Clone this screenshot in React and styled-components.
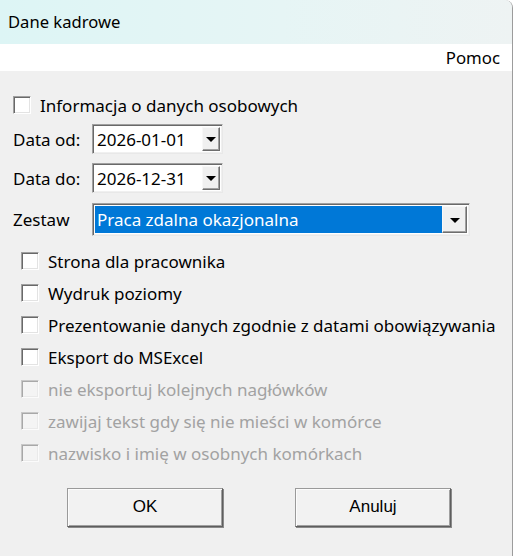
import React from 'react';
import styled, { createGlobalStyle } from 'styled-components';

const GlobalStyle = createGlobalStyle`
	html, body {
		margin: 0;
		padding: 0;
		background: #ffffff;
	}
	body {
		font-family: "Noto Sans", "Open Sans", sans-serif;
		color: #000;
	}
`;

const Window = styled.div`
	width: 513px;
	height: 556px;
	box-sizing: border-box;
	border-right: 1px solid #9c9c9c;
	border-top-right-radius: 8px;
	background: #f0f0f0;
	display: flex;
	flex-direction: column;
	overflow: hidden;
`;

const TitleBar = styled.div`
	height: 44px;
	flex: none;
	display: flex;
	align-items: center;
	padding-left: 8px;
	padding-bottom: 2px;
	box-sizing: border-box;
	background: linear-gradient(90deg, #ddf5f5 0%, #e6f5f5 55%, #eef3f3 100%);
	font-size: 16.6px;
`;

const MenuBar = styled.div`
	height: 27px;
	flex: none;
	display: flex;
	justify-content: flex-end;
	align-items: center;
	padding-right: 12px;
	background: #ffffff;
	font-size: 16.8px;
`;

const Body = styled.div`
	flex: 1;
	display: flex;
	flex-direction: column;
	padding: 20px 0 0 13px;
	font-size: 17px;
`;

const Row = styled.div`
	display: flex;
	align-items: center;
	height: ${p => p.h || 28}px;
	margin-top: ${p => p.mt || 0}px;
	margin-left: ${p => p.indent || 0}px;
	color: ${p => (p.disabled ? '#a2a2a2' : '#000')};
`;

const Box = styled.span`
	width: 18px;
	height: 18px;
	box-sizing: border-box;
	flex: none;
	margin-right: 9px;
	background: ${p => (p.disabled ? '#f4f4f4' : '#ffffff')};
	border: 1px solid;
	border-color: ${p => (p.disabled ? '#c8c8c8 #fbfbfb #fbfbfb #c8c8c8' : '#a0a0a0 #ffffff #ffffff #a0a0a0')};
	box-shadow: ${p => (p.disabled
		? 'inset 1px 1px 0 #a8a8a8, inset -1px -1px 0 #eaeaea'
		: 'inset 1px 1px 0 #696969, inset -1px -1px 0 #e3e3e3')};
`;

const Label = styled.span`
	width: 79px;
	flex: none;
`;

const Sunken = styled.div`
	width: ${p => p.w}px;
	height: ${p => p.h}px;
	box-sizing: border-box;
	display: flex;
	align-items: stretch;
	background: #ffffff;
	border: 1px solid;
	border-color: #a0a0a0 #e8e8e8 #e8e8e8 #a0a0a0;
	box-shadow: inset 1px 1px 0 #696969, inset -1px -1px 0 #f0f0f0;
	padding: 2px;
`;

const Value = styled.div`
	flex: 1;
	display: flex;
	align-items: center;
	padding-left: 2px;
	font-size: 17px;
	background: ${p => (p.selected ? '#0078d7' : 'transparent')};
	color: ${p => (p.selected ? '#ffffff' : '#000')};
`;

const DropButton = styled.div`
	width: ${p => p.w || 18}px;
	flex: none;
	display: flex;
	align-items: center;
	justify-content: center;
	box-sizing: border-box;
	background: #f0f0f0;
	border: 1px solid;
	border-color: #f8f8f8 #6e6e6e #6e6e6e #f8f8f8;
	box-shadow: inset -1px -1px 0 #a0a0a0;
`;

const Arrow = styled.span`
	width: 0;
	height: 0;
	border-left: 5px solid transparent;
	border-right: 5px solid transparent;
	border-top: 5px solid #000;
	margin-top: 1px;
`;

const Buttons = styled.div`
	display: flex;
	gap: 72px;
	margin: 19px 0 0 54px;
`;

const Button = styled.div`
	width: 156px;
	height: 39px;
	box-sizing: border-box;
	display: flex;
	align-items: center;
	justify-content: center;
	font-family: "Liberation Sans", Arial, sans-serif;
	font-size: 17px;
	background: #f2f2f2;
	border: 1px solid;
	border-color: #9a9a9a #5e5e5e #5e5e5e #9a9a9a;
	box-shadow: inset 1px 1px 0 #fcfcfc, inset -1px -1px 0 #a0a0a0, 1px 1px 0 #8a8a8a;
	padding-bottom: 1px;
`;

function Check({ label, disabled }) {
	return (
		<Row h={32} indent={8} disabled={disabled}>
			<Box disabled={disabled} />
			{label}
		</Row>
	);
}

function DateField({ label, value, mt }) {
	return (
		<Row h={30} mt={mt}>
			<Label>{label}</Label>
			<Sunken w={131} h={30}>
				<Value>{value}</Value>
				<DropButton><Arrow /></DropButton>
			</Sunken>
		</Row>
	);
}

const options = [
	{ label: 'Strona dla pracownika' },
	{ label: 'Wydruk poziomy' },
	{ label: 'Prezentowanie danych zgodnie z datami obowiązywania' },
	{ label: 'Eksport do MSExcel' },
	{ label: 'nie eksportuj kolejnych nagłówków', disabled: true },
	{ label: 'zawijaj tekst gdy się nie mieści w komórce', disabled: true },
	{ label: 'nazwisko i imię w osobnych komórkach', disabled: true },
];

export default function App() {
	return (
		<>
			<GlobalStyle />
			<Window>
				<TitleBar>Dane kadrowe</TitleBar>
				<MenuBar>Pomoc</MenuBar>
				<Body>
					<Row h={28}>
						<Box />
						Informacja o danych osobowych
					</Row>
					<DateField label="Data od:" value="2026-01-01" mt={5} />
					<DateField label="Data do:" value="2026-12-31" mt={9} />
					<Row h={33} mt={10}>
						<Label>Zestaw</Label>
						<Sunken w={378} h={33}>
							<Value selected>Praca zdalna okazjonalna</Value>
							<DropButton w={25}><Arrow /></DropButton>
						</Sunken>
					</Row>
					<div style={{ marginTop: 9 }}>
						{options.map(o => <Check key={o.label} {...o} />)}
					</div>
					<Buttons>
						<Button>OK</Button>
						<Button>Anuluj</Button>
					</Buttons>
				</Body>
			</Window>
		</>
	);
}
